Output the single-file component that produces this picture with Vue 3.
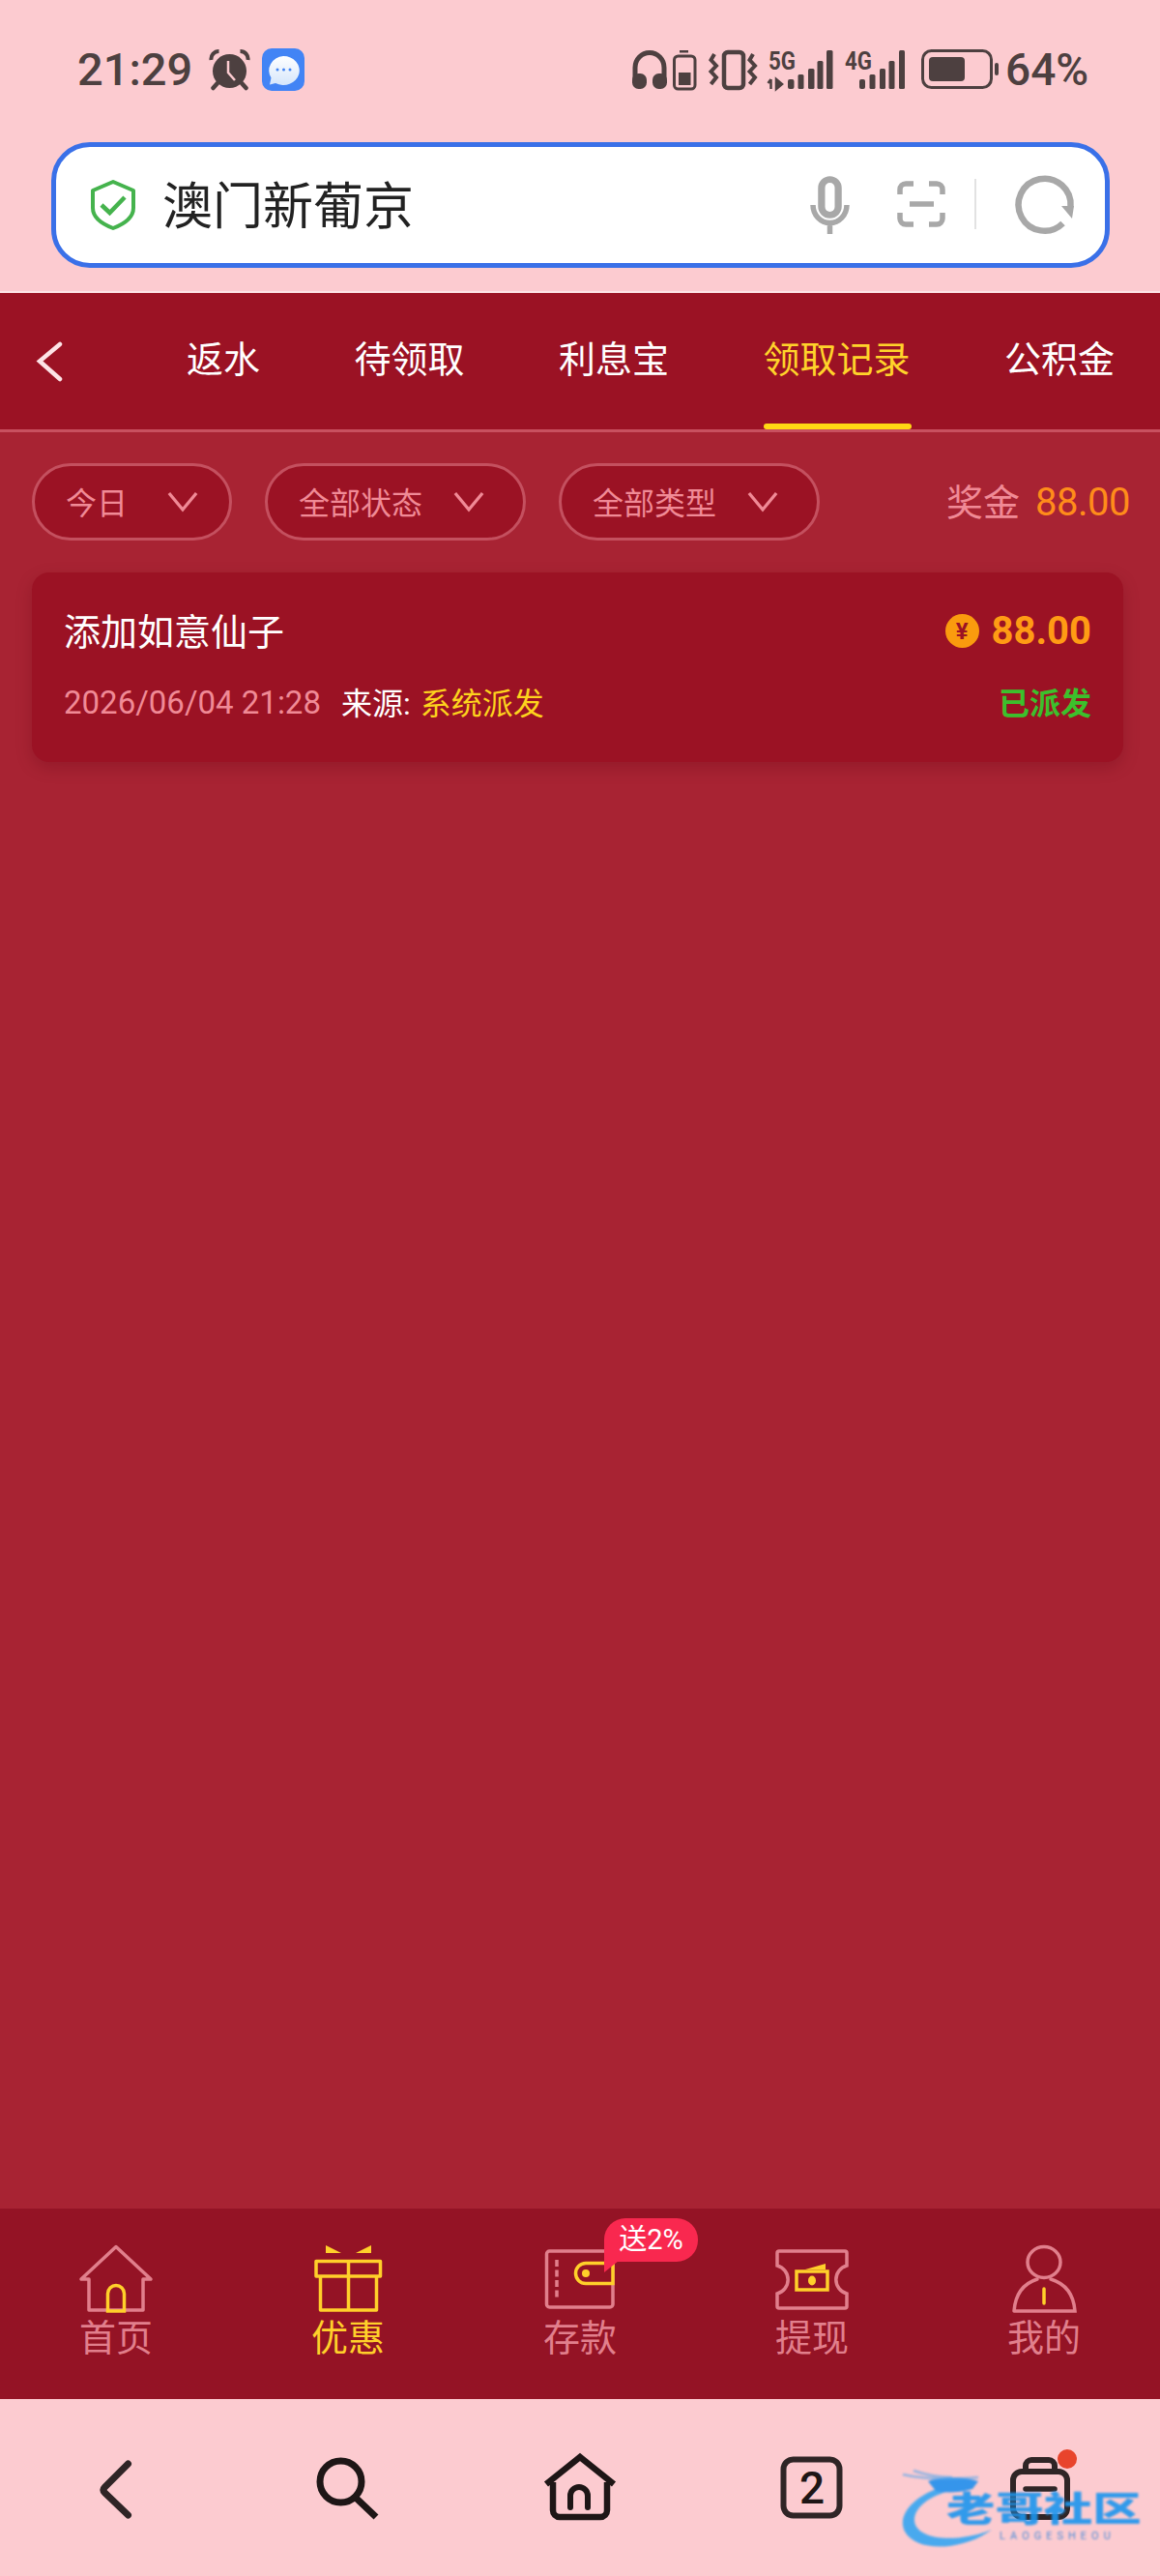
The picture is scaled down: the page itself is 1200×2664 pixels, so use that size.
<script setup>
const tabs = [
  { label: '返水' },
  { label: '待领取' },
  { label: '利息宝' },
  { label: '领取记录', active: true },
  { label: '公积金' }
]
const filters = ['今日', '全部状态', '全部类型']
</script>

<template>
  <div class="page">
    <div class="top">
      <div class="status">
        <span class="time">21:29</span>
        <svg class="alarm" viewBox="215 51 45 44" width="45" height="44">
          <circle cx="237.500" cy="74.500" r="17.500" fill="#4d4040" />
          <path d="M218.500 63 a8 8 0 0 1 8 -9 M256.500 63 a8 8 0 0 0 -8 -9" fill="none" stroke="#4d4040" stroke-width="4" />
          <path d="M225 87 L220.500 92 M250 87 L254.500 92" stroke="#4d4040" stroke-width="4.500" stroke-linecap="round" />
          <path d="M236 64 V76 L243 84" fill="none" stroke="#fccbd0" stroke-width="2.500" />
        </svg>
        <svg class="msg" viewBox="271 50 44 44" width="44" height="44">
          <defs>
            <linearGradient id="bub" x1="0" y1="0" x2="0" y2="1">
              <stop offset="0" stop-color="#ffffff" />
              <stop offset="1" stop-color="#d5e6fb" />
            </linearGradient>
          </defs>
          <rect x="271" y="50" width="44" height="44" rx="10" fill="#4284f5" />
          <path d="M293 58 a16.500 15 0 1 1 -8 28 l-6 1.500 l1.500 -7 a16.500 15 0 0 1 12.500 -22.500 Z" fill="url(#bub)" />
          <circle cx="287" cy="72" r="1.500" fill="#4284f5" />
          <circle cx="293.500" cy="72" r="1.500" fill="#4284f5" />
          <circle cx="300" cy="72" r="1.500" fill="#4284f5" />
        </svg>
        <svg class="cluster" viewBox="654 30 380 84" width="380" height="84">
          <g fill="#4d4040">
            <path d="M657 82 V70 a15 15.500 0 0 1 30 0 V82" fill="none" stroke="#4d4040" stroke-width="5" />
            <rect x="654" y="76" width="15" height="16" rx="6.500" />
            <rect x="675" y="76" width="15" height="16" rx="6.500" />
            <rect x="703" y="52" width="9" height="2.500" />
            <rect x="697.500" y="58" width="21.500" height="34" rx="4" fill="none" stroke="#4d4040" stroke-width="3" />
            <rect x="702" y="75" width="12.500" height="13" />
            <rect x="749" y="54" width="20" height="37" rx="4" fill="none" stroke="#4d4040" stroke-width="4.500" />
            <path d="M739 56 L735.500 62 L741 68 L735.500 74 L741 80 L735.500 87 M779 56 L775.500 62 L781 68 L775.500 74 L781 80 L775.500 87" fill="none" stroke="#4d4040" stroke-width="4" />
            <text x="795" y="72" font-size="26" font-weight="700" textLength="28" lengthAdjust="spacingAndGlyphs" class="net">5G</text>
            <path d="M797.500 82 V92 M794.500 86 L797.500 82 M803 82 V92 L809 87 Z" fill="#4d4040" stroke="#4d4040" stroke-width="2.500" />
            <rect x="815" y="82" width="6.500" height="10" rx="2" />
            <rect x="825.500" y="77" width="6" height="15" rx="1.500" />
            <rect x="836" y="71" width="6.500" height="21" rx="1.500" />
            <rect x="845.500" y="63" width="6" height="29" rx="1.500" />
            <rect x="855" y="52" width="6.500" height="40" rx="1.500" />
            <text x="874" y="72" font-size="26" font-weight="700" textLength="28" lengthAdjust="spacingAndGlyphs" class="net">4G</text>
            <rect x="889" y="82" width="6" height="10" rx="2" />
            <rect x="899.500" y="77" width="6" height="15" rx="1.500" />
            <rect x="910" y="71" width="6" height="21" rx="1.500" />
            <rect x="919.500" y="63" width="6" height="29" rx="1.500" />
            <rect x="930" y="52" width="6" height="40" rx="1.500" />
            <rect x="954.500" y="52.500" width="71" height="38" rx="9" fill="none" stroke="#4d4040" stroke-width="3" />
            <rect x="961" y="59" width="37" height="25" rx="4" />
            <rect x="1029" y="65" width="4" height="13" rx="2" />
          </g>
        </svg>
        <span class="pct">64%</span>
      </div>
      <div class="search">
        <svg class="shield" viewBox="92 184 50 56" width="50" height="56">
          <path d="M117 188 L138 197 V215 Q138 228 117 236 Q96 228 96 215 V197 Z" fill="none" stroke="#45b34d" stroke-width="4" stroke-linejoin="round" />
          <path d="M105 212 L113.500 220 L129 204" fill="none" stroke="#45b34d" stroke-width="4.500" />
        </svg>
        <span class="query">澳门新葡京</span>
        <svg class="tools" viewBox="830 178 285 68" width="285" height="68">
          <g fill="none" stroke="#a8a8a8" stroke-width="5.500">
            <rect x="848" y="185" width="19" height="38" rx="9.500" fill="#a8a8a8" stroke="#a8a8a8" />
            <rect x="852.500" y="189" width="10" height="30" rx="5" fill="#fff" stroke="none" />
            <path d="M840 212 a17.500 18.500 0 0 0 35 0 M857.500 231 V242" />
            <path d="M944 190 H936 a6 6 0 0 0 -6 6 V201 M960 190 H968 a6 6 0 0 1 6 6 V201 M930 220 V226 a6 6 0 0 0 6 6 H944 M974 220 V226 a6 6 0 0 1 -6 6 H960 M940 211 H965" />
            <path d="M1098.500 231 A27 27 0 1 1 1106.500 214" stroke-width="6.500" />
          </g>
          <path d="M1008 185 V237" stroke="#e2e2e2" stroke-width="2" />
          <path d="M1097 213 L1110 213 L1108 226 Z" fill="#a8a8a8" />
        </svg>
      </div>
    </div>

    <header class="head">
      <svg class="back" viewBox="37 352 28 44" width="28" height="44">
        <path d="M62 356 L41 373.500 L62 392" fill="none" stroke="#fde3e6" stroke-width="4.500" stroke-linecap="round" />
      </svg>
      <nav class="tabs">
        <div v-for="t in tabs" :key="t.label" class="tab" :class="{ on: t.active }">
          {{ t.label }}
          <i v-if="t.active" class="bar"></i>
        </div>
      </nav>
    </header>

    <main class="content">
      <div class="filters">
        <div v-for="f in filters" :key="f" class="pill">
          <span>{{ f }}</span>
          <svg viewBox="0 0 34 24" width="32" height="23">
            <path d="M2 3 L17 21 L32 3" fill="none" stroke="#f08a96" stroke-width="3.500" />
          </svg>
        </div>
        <div class="bonus"><span class="bonus-label">奖金</span><b>88.00</b></div>
      </div>
      <section class="card">
        <div class="row first">
          <span class="title">添加如意仙子</span>
          <span class="amount">
            <span class="coin">¥</span>88.00
          </span>
        </div>
        <div class="row second">
          <span class="meta">
            <span class="date">2026/06/04 21:28</span>
            <span class="src">来源:</span>
            <span class="sys">系统派发</span>
          </span>
          <span class="state">已派发</span>
        </div>
      </section>
    </main>

    <footer class="dock">
      <div class="item">
        <svg viewBox="80 2320 80 72" width="80" height="72">
          <path d="M84 2357 L120 2323.500 L156 2357 H148 M84 2357 H92 V2389 H148 V2357" fill="none" stroke="#e17f8c" stroke-width="3.500" stroke-linejoin="round" stroke-linecap="round" />
          <path d="M111.500 2390 V2372 a8.500 8.500 0 0 1 17 0 V2390 Z" fill="none" stroke="#ffd02a" stroke-width="3.500" />
        </svg>
        <span>首页</span>
      </div>
      <div class="item on">
        <svg viewBox="320 2320 80 72" width="80" height="72">
          <path d="M337 2322 V2330 H353 Z M384 2322 V2330 H368 Z" fill="#ffd02a" />
          <path d="M327 2338.500 H393.500 V2354 H327 Z M331.500 2354 V2389 H389.500 V2354 M360.500 2338.500 V2389" fill="none" stroke="#ffd02a" stroke-width="3.500" stroke-linejoin="round" />
        </svg>
        <span>优惠</span>
      </div>
      <div class="item">
        <svg viewBox="562 2320 80 72" width="80" height="72">
          <rect x="567.500" y="2328" width="68.500" height="58" rx="3" fill="none" stroke="#e17f8c" stroke-width="3.500" />
          <path d="M578 2337 V2376" stroke="#e17f8c" stroke-width="3.500" stroke-dasharray="7 3.500" fill="none" />
          <path d="M636 2340.500 H608 a10 10 0 0 0 0 21 H636 Z" fill="#941325" stroke="#ffd02a" stroke-width="3.500" />
          <circle cx="608" cy="2351" r="4" fill="#ffd02a" />
        </svg>
        <span>存款</span>
        <div class="badge">送2%</div>
      </div>
      <div class="item">
        <svg viewBox="802 2320 80 72" width="80" height="72">
          <path d="M808 2328 H876 a2 2 0 0 1 2 2 V2343 a15 15 0 0 0 0 29 V2385 a2 2 0 0 1 -2 2 H808 a2 2 0 0 1 -2 -2 V2372 a15 15 0 0 0 0 -29 V2330 a2 2 0 0 1 2 -2 Z" fill="none" stroke="#e17f8c" stroke-width="3.500" />
          <rect x="826" y="2349" width="32" height="19" fill="none" stroke="#ffd02a" stroke-width="3.500" />
          <path d="M835 2347 L856 2341 V2347 Z" fill="#ffd02a" />
          <ellipse cx="842" cy="2358.500" rx="4" ry="5" fill="#ffd02a" />
        </svg>
        <span>提现</span>
      </div>
      <div class="item">
        <svg viewBox="1043 2320 80 72" width="80" height="72">
          <ellipse cx="1083" cy="2339.500" rx="17" ry="16" fill="none" stroke="#e17f8c" stroke-width="3.500" />
          <path d="M1052 2390 H1115 Q1113 2364 1090 2357 M1052 2390 Q1054 2364 1076 2357" fill="none" stroke="#e17f8c" stroke-width="3.500" stroke-linecap="round" />
          <path d="M1083 2367 V2382" stroke="#ffd02a" stroke-width="3.500" stroke-linecap="round" />
        </svg>
        <span>我的</span>
      </div>
    </footer>

    <div class="sysnav">
      <svg viewBox="101.500 2530 34 80" width="34" height="80">
        <path d="M131 2548 L107 2572 Q104 2575 107 2578 L131 2601" fill="none" stroke="#2f2526" stroke-width="7" stroke-linecap="round" />
      </svg>
      <svg viewBox="327 2530 66 80" width="66" height="80">
        <circle cx="352.500" cy="2566.500" r="21.500" fill="none" stroke="#1e1616" stroke-width="7" />
        <path d="M369 2584 L389 2603" stroke="#1e1616" stroke-width="7" />
      </svg>
      <svg viewBox="562 2530 76 80" width="76" height="80">
        <path d="M565 2569 L600 2541 L635 2569" fill="none" stroke="#1e1616" stroke-width="6.500" />
        <path d="M572 2567 V2596 a7 7 0 0 0 7 7 H621 a7 7 0 0 0 7 -7 V2567" fill="none" stroke="#1e1616" stroke-width="6.500" />
        <path d="M590 2593 V2581 a9 9 0 0 1 18 0 V2593" fill="none" stroke="#1e1616" stroke-width="6" stroke-linecap="round" />
      </svg>
      <svg viewBox="808 2530 66 80" width="66" height="80">
        <rect x="811.500" y="2543.500" width="58" height="58" rx="10" fill="none" stroke="#2f2526" stroke-width="6" />
        <text x="841" y="2589" font-size="46" font-weight="500" text-anchor="middle" class="two">2</text>
      </svg>
      <svg viewBox="1048 2530 74 80" width="74" height="80">
        <rect x="1053" y="2556" width="56" height="47" rx="9" fill="none" stroke="#2f2526" stroke-width="6" />
        <path d="M1066 2556 V2550 a6 6 0 0 1 6 -6 H1090 a6 6 0 0 1 6 6 V2556" fill="none" stroke="#2f2526" stroke-width="6" />
        <path d="M1066 2574 H1096" stroke="#2f2526" stroke-width="5.500" stroke-linecap="round" />
        <circle cx="1109" cy="2543" r="10" fill="#e8442c" />
      </svg>
      <div class="mark">
        <svg viewBox="930 2550 100 90" width="100" height="90">
          <path d="M992 2568 C952 2574 926 2598 936 2618 C948 2640 996 2638 1026 2616 C992 2630 944 2628 946 2604 C949 2586 975 2576 1000 2572 Z" fill="#36a6f2" />
          <path d="M960 2566 Q985 2558 1012 2566 L1006 2574 Q985 2580 968 2576 Z" fill="#2090ee" />
          <path d="M934 2559 Q965 2566 1012 2562 M945 2555 Q965 2562 985 2562" fill="none" stroke="#3aa0ee" stroke-width="2.500" opacity=".6" />
        </svg>
        <span class="mark-cn">老哥社区</span>
        <span class="mark-en">LAOGESHEOU</span>
      </div>
    </div>
  </div>
</template>

<style>
html, body { margin: 0; padding: 0; }
</style>

<style scoped>
.page {
  position: relative;
  display: flex;
  flex-direction: column;
  width: 1200px;
  height: 2664px;
  overflow: hidden;
  font-family: Roboto, "Noto Sans CJK SC", sans-serif;
  background: #fccbd0;
}
svg { display: block; flex: none; }

.top { height: 303px; box-sizing: border-box; padding-top: 50px; border-bottom: 2px solid #fde3e5; }
.status { display: flex; align-items: center; height: 44px; padding-left: 80px; color: #4d4040; }
.time { width: 135px; font-size: 47px; font-weight: 500; line-height: 44px; }
.alarm { margin-right: 11px; }
.msg { margin-right: 339px; }
.pct { margin-left: 6px; font-size: 46px; font-weight: 500; line-height: 44px; }
.net { font-family: Roboto, sans-serif; }

.search {
  display: flex;
  align-items: center;
  box-sizing: border-box;
  width: 1095px;
  height: 130px;
  margin: 53px 0 0 53px;
  padding-left: 34px;
  background: #fff;
  border: 5px solid #3a70e8;
  border-radius: 40px;
}
.shield { margin-right: 26px; }
.query { width: 663px; padding-top: 5px; font-size: 52px; color: #222; line-height: 60px; }

.head {
  display: flex;
  box-sizing: border-box;
  height: 144px;
  padding-left: 37px;
  background: #9b1224;
  border-bottom: 3px solid #c8505f;
}
.back { margin-top: 49px; margin-right: 128px; }
.tabs { display: flex; gap: 97.5px; }
.tab {
  position: relative;
  box-sizing: border-box;
  height: 141px;
  padding-top: 41px;
  font-size: 38px;
  line-height: 56px;
  color: #fff;
  white-space: nowrap;
}
.tab.on { color: #ffd32a; }
.bar {
  position: absolute;
  left: 0;
  right: -1px;
  bottom: 0;
  height: 6px;
  background: #ffd814;
  border-radius: 3px;
}

.content { flex: 1; background: #a82333; }
.filters { display: flex; align-items: center; height: 80px; margin-top: 32px; padding-left: 33px; gap: 34px; }
.pill {
  display: flex;
  align-items: center;
  box-sizing: border-box;
  height: 80px;
  padding: 0 40px 2px 32px;
  gap: 32px;
  background: #9b1224;
  border: 3px solid #c4505f;
  border-radius: 40px;
  font-size: 32px;
  color: #f08a96;
}
.pill:first-child { gap: 41px; padding-right: 32px; }
.bonus {
  display: flex;
  align-items: center;
  margin-left: auto;
  padding-right: 31px;
  font-size: 38px;
  color: #f08a96;
}
.bonus-label { margin-top: -6px; }
.bonus b { margin-left: 16px; font-size: 40px; font-weight: 400; color: #ff8c1a; letter-spacing: -.5px; }

.card {
  box-sizing: border-box;
  height: 196px;
  margin: 33px 38px 0 33px;
  padding: 32px 33px 0;
  background: #9b1224;
  border-radius: 18px;
  box-shadow: 0 6px 16px rgba(90, 0, 15, .25);
}
.row { display: flex; align-items: center; justify-content: space-between; }
.first { height: 52px; }
.second { height: 46px; margin-top: 26px; }
.title { font-size: 38px; color: #fff; }
.amount { display: flex; align-items: center; margin-top: 5px; font-size: 40px; font-weight: 700; color: #ff9b14; }
.coin {
  display: flex;
  align-items: center;
  justify-content: center;
  width: 35px;
  height: 35px;
  margin-right: 13px;
  border-radius: 50%;
  background: #fa9b0e;
  color: #9b1224;
  font-size: 24px;
  font-weight: 700;
}
.meta { display: flex; align-items: center; font-size: 32px; }
.date { font-size: 33px; color: #f08a96; margin-top: 3px; }
.src { margin-left: 21px; color: #fff; }
.sys { margin-left: 10px; color: #fdd31d; }
.state { font-size: 32px; font-weight: 700; color: #3cc02c; }

.dock {
  display: grid;
  grid-template-columns: repeat(5, 240px);
  box-sizing: border-box;
  height: 197px;
  padding-top: 36px;
  background: #941325;
}
.item { position: relative; display: flex; flex-direction: column; align-items: center; color: #e17f8c; }
.item.on { color: #ffd02a; }
.item span { margin-top: 6px; font-size: 38px; line-height: 40px; }
.badge {
  position: absolute;
  top: -26px;
  left: 145px;
  width: 97px;
  height: 45px;
  border-radius: 22px 22px 22px 4px;
  background: #f9284f;
  color: #fff;
  font-size: 29px;
  line-height: 45px;
  text-align: center;
  white-space: nowrap;
}
.badge::after {
  content: "";
  position: absolute;
  top: 40px;
  left: 0;
  border-top: 16px solid #f9284f;
  border-right: 20px solid transparent;
}

.sysnav {
  display: grid;
  grid-template-columns: repeat(5, 240px);
  justify-items: center;
  box-sizing: border-box;
  height: 183px;
  padding-top: 49px;
  position: relative;
}
.mark {
  position: absolute;
  left: 930px;
  top: 69px;
  width: 270px;
  height: 90px;
  filter: blur(1px);
  opacity: .9;
}
.mark-cn {
  position: absolute;
  left: 49px;
  top: 26px;
  font-size: 36px;
  font-weight: 900;
  line-height: 40px;
  white-space: nowrap;
  color: #1c95ee;
  transform: scaleX(1.4);
  transform-origin: left center;
}
.mark-en {
  position: absolute;
  left: 104px;
  top: 67px;
  font-size: 11px;
  line-height: 12px;
  letter-spacing: 5px;
  color: #3a87d8;
  white-space: nowrap;
}
.two { font-family: Roboto, sans-serif; fill: #1e1616; }
</style>
